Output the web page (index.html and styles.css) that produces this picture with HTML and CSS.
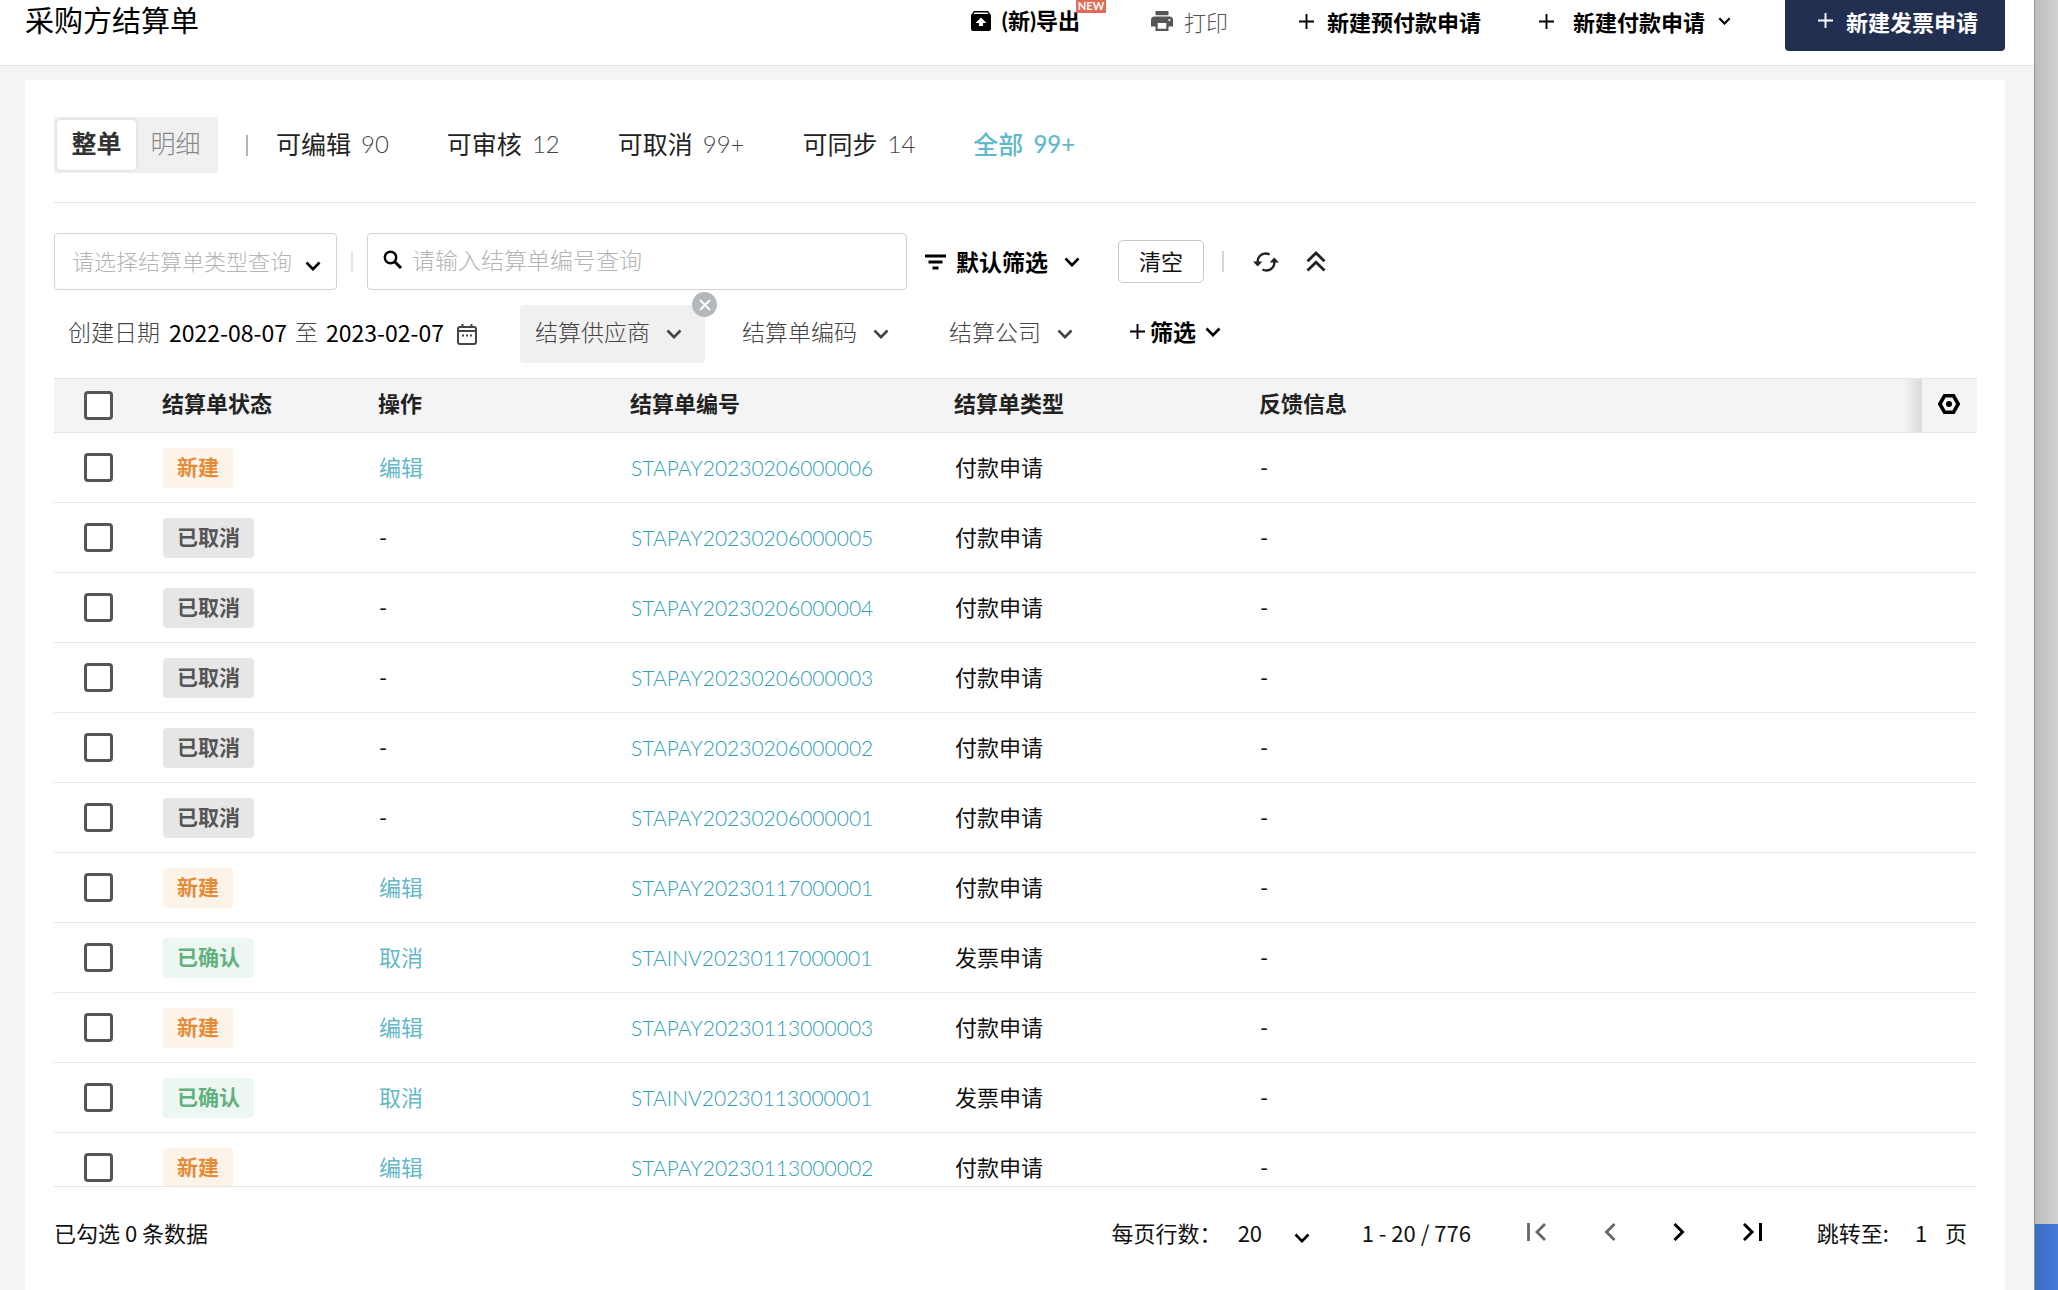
FILE: index.html
```html
<!DOCTYPE html>
<html lang="zh-CN">
<head>
<meta charset="utf-8">
<meta name="viewport" content="width=device-width, initial-scale=1">
<title>采购方结算单</title>
<link rel="stylesheet" href="styles.css">
</head>
<body>
<svg class="sprite" aria-hidden="true">
  <symbol id="chevron" viewBox="0 0 16 10"><path d="M1.5 1.5 8 8.2l6.5-6.7" fill="none" stroke="currentColor" stroke-width="2.6"/></symbol>
  <symbol id="plus" viewBox="0 0 16 16"><path d="M8 0v16M0 8h16" fill="none" stroke="currentColor" stroke-width="2"/></symbol>
</svg>
<div class="window">
  <header class="topbar">
    <h1 class="title">采购方结算单</h1>
    <div class="actions">
      <button class="action export" type="button">
        <svg width="20" height="20" viewBox="0 0 20 20"><path fill="currentColor" fill-rule="evenodd" d="M3 0h14l3 4v14a2 2 0 0 1-2 2H2a2 2 0 0 1-2-2V4zM2.4 3h15.200l-1.200-1.600H3.600zM10 6.500l-5.500 5.500H8v3h4v-3h3.500z"/></svg>
        <span>(新)导出</span><span class="new">NEW</span>
      </button>
      <button class="action print" type="button">
        <svg width="22" height="20" viewBox="0 0 22 20"><path fill="currentColor" fill-rule="evenodd" d="M4.500 0h13v4.200h-13zM3.500 5.500h15A3.500 3.500 0 0 1 22 9v6.500h-4.500V20h-13v-4.500H0V9a3.500 3.500 0 0 1 3.500-3.500zM6.700 12v5.800h8.600V12zM18.400 8a1.100 1.100 0 1 0 0 2.200 1.100 1.100 0 0 0 0-2.200z"/></svg>
        <span>打印</span>
      </button>
      <button class="action prepay" type="button"><svg width="15" height="15"><use href="#plus"/></svg><span>新建预付款申请</span></button>
      <button class="action pay" type="button"><svg width="15" height="15"><use href="#plus"/></svg><span>新建付款申请</span><svg class="caret" width="13" height="8"><use href="#chevron"/></svg></button>
      <button class="action primary" type="button"><svg width="15" height="15"><use href="#plus"/></svg><span>新建发票申请</span></button>
    </div>
  </header>

  <main class="panel">
    <nav class="tabs">
      <div class="segment">
        <button class="seg active" type="button">整单</button>
        <button class="seg" type="button">明细</button>
      </div>
      <span class="rule dark"></span>
      <div class="states">
        <button class="state" type="button">可编辑<span class="count">90</span></button>
        <button class="state" type="button">可审核<span class="count">12</span></button>
        <button class="state" type="button">可取消<span class="count">99+</span></button>
        <button class="state" type="button">可同步<span class="count">14</span></button>
        <button class="state current" type="button">全部<span class="count">99+</span></button>
      </div>
    </nav>

    <div class="query">
      <div class="pick">
        <select class="pick-select" aria-label="结算单类型"><option>请选择结算单类型查询</option></select>
        <svg class="pick-icon" width="16" height="10"><use href="#chevron"/></svg>
      </div>
      <span class="rule light"></span>
      <label class="search">
        <svg width="20" height="20" viewBox="0 0 20 20"><circle cx="7.500" cy="7.500" r="5.700" fill="none" stroke="currentColor" stroke-width="2.400"/><path d="M11.500 11.500 18 18" stroke="currentColor" stroke-width="3"/></svg>
        <input class="search-input" type="text" placeholder="请输入结算单编号查询" aria-label="结算单编号">
      </label>
      <button class="preset" type="button">
        <svg width="21" height="16" viewBox="0 0 21 16"><path d="M0 2h21M3.500 8h14M7.500 14h6" stroke="currentColor" stroke-width="3"/></svg>
        <span>默认筛选</span>
        <svg class="preset-caret" width="16" height="10"><use href="#chevron"/></svg>
      </button>
      <button class="clear" type="button">清空</button>
      <span class="rule"></span>
      <button class="tool" type="button" aria-label="刷新">
        <svg width="26" height="22" viewBox="0 0 26 22"><g fill="none" stroke="currentColor" stroke-width="2.400"><path d="M4.600 11.500V11a8 8 0 0 1 8-8.500c1.500 0 2.800.4 4 1"/><path d="M21.400 10.500v.5a8 8 0 0 1-8 8.500c-1.500 0-2.800-.4-4-1"/></g><path fill="currentColor" d="M0 10.500h9.400l-4.700 5zM26 11.500h-9.400l4.700-5z"/></svg>
      </button>
      <button class="tool fold" type="button" aria-label="收起">
        <svg width="20" height="21" viewBox="0 0 20 21"><path d="M1.500 10.200 10 2l8.500 8.200M1.500 19.500l8.500-8.200 8.500 8.200" fill="none" stroke="currentColor" stroke-width="2.800"/></svg>
      </button>
    </div>

    <div class="filters">
      <div class="dates">
        <span class="dates-label">创建日期</span>
        <input class="date" type="text" value="2022-08-07" aria-label="创建日期起">
        <span class="to">至</span>
        <input class="date" type="text" value="2023-02-07" aria-label="创建日期止">
        <svg class="calendar" width="20" height="21" viewBox="0 0 20 21"><rect x="1" y="3" width="18" height="17" rx="2" fill="none" stroke="currentColor" stroke-width="2"/><path d="M1 7h18M5.500 0v4M14.500 0v4" stroke="currentColor" stroke-width="2"/><path d="M5 11.500h2M9 11.500h2M13 11.500h2" stroke="currentColor" stroke-width="2"/></svg>
      </div>
      <div class="chip-wrap">
        <button class="chip filled" type="button">结算供应商<svg width="16" height="10"><use href="#chevron"/></svg></button>
        <button class="remove" type="button" aria-label="移除"><svg width="12" height="12" viewBox="0 0 12 12"><path d="M1 1l10 10M11 1 1 11" stroke="currentColor" stroke-width="1.800"/></svg></button>
      </div>
      <button class="chip" type="button">结算单编码<svg width="16" height="10"><use href="#chevron"/></svg></button>
      <button class="chip" type="button">结算公司<svg width="16" height="10"><use href="#chevron"/></svg></button>
      <button class="add" type="button"><svg width="15" height="15"><use href="#plus"/></svg><span>筛选</span><svg class="add-caret" width="16" height="10"><use href="#chevron"/></svg></button>
    </div>

    <div class="grid">
      <table class="table">
        <colgroup><col class="c-check"><col class="c-state"><col class="c-op"><col class="c-no"><col class="c-type"><col><col class="c-set"></colgroup>
        <thead>
          <tr>
            <th class="check"><input class="box" type="checkbox" aria-label="全选"></th>
            <th>结算单状态</th><th>操作</th><th>结算单编号</th><th>结算单类型</th><th class="shade">反馈信息</th>
            <th class="set"><button class="tool" type="button" aria-label="列设置"><svg width="22" height="20" viewBox="0 0 22 20"><path d="M6.500 1.800h9L20.200 10l-4.700 8.200h-9L1.800 10z" fill="none" stroke="currentColor" stroke-width="3.600"/><circle cx="11" cy="10" r="3" fill="currentColor"/></svg></button></th>
          </tr>
        </thead>
        <tbody>
          <tr><td class="check"><input class="box" type="checkbox" aria-label="选择"></td><td><span class="tag fresh">新建</span></td><td><a href="#">编辑</a></td><td><a class="code" href="#">STAPAY20230206000006</a></td><td>付款申请</td><td>-</td><td></td></tr>
          <tr><td class="check"><input class="box" type="checkbox" aria-label="选择"></td><td><span class="tag void">已取消</span></td><td>-</td><td><a class="code" href="#">STAPAY20230206000005</a></td><td>付款申请</td><td>-</td><td></td></tr>
          <tr><td class="check"><input class="box" type="checkbox" aria-label="选择"></td><td><span class="tag void">已取消</span></td><td>-</td><td><a class="code" href="#">STAPAY20230206000004</a></td><td>付款申请</td><td>-</td><td></td></tr>
          <tr><td class="check"><input class="box" type="checkbox" aria-label="选择"></td><td><span class="tag void">已取消</span></td><td>-</td><td><a class="code" href="#">STAPAY20230206000003</a></td><td>付款申请</td><td>-</td><td></td></tr>
          <tr><td class="check"><input class="box" type="checkbox" aria-label="选择"></td><td><span class="tag void">已取消</span></td><td>-</td><td><a class="code" href="#">STAPAY20230206000002</a></td><td>付款申请</td><td>-</td><td></td></tr>
          <tr><td class="check"><input class="box" type="checkbox" aria-label="选择"></td><td><span class="tag void">已取消</span></td><td>-</td><td><a class="code" href="#">STAPAY20230206000001</a></td><td>付款申请</td><td>-</td><td></td></tr>
          <tr><td class="check"><input class="box" type="checkbox" aria-label="选择"></td><td><span class="tag fresh">新建</span></td><td><a href="#">编辑</a></td><td><a class="code" href="#">STAPAY20230117000001</a></td><td>付款申请</td><td>-</td><td></td></tr>
          <tr><td class="check"><input class="box" type="checkbox" aria-label="选择"></td><td><span class="tag done">已确认</span></td><td><a href="#">取消</a></td><td><a class="code" href="#">STAINV20230117000001</a></td><td>发票申请</td><td>-</td><td></td></tr>
          <tr><td class="check"><input class="box" type="checkbox" aria-label="选择"></td><td><span class="tag fresh">新建</span></td><td><a href="#">编辑</a></td><td><a class="code" href="#">STAPAY20230113000003</a></td><td>付款申请</td><td>-</td><td></td></tr>
          <tr><td class="check"><input class="box" type="checkbox" aria-label="选择"></td><td><span class="tag done">已确认</span></td><td><a href="#">取消</a></td><td><a class="code" href="#">STAINV20230113000001</a></td><td>发票申请</td><td>-</td><td></td></tr>
          <tr><td class="check"><input class="box" type="checkbox" aria-label="选择"></td><td><span class="tag fresh">新建</span></td><td><a href="#">编辑</a></td><td><a class="code" href="#">STAPAY20230113000002</a></td><td>付款申请</td><td>-</td><td></td></tr>
        </tbody>
      </table>
    </div>

    <footer class="pager">
      <span class="picked">已勾选 0 条数据</span>
      <label for="size">每页行数：</label>
      <div class="size">
        <select id="size" class="size-select"><option>20</option></select>
        <svg class="size-icon" width="16" height="10"><use href="#chevron"/></svg>
      </div>
      <span class="range">1 - 20 / 776</span>
      <div class="steps">
        <button class="step off" type="button" aria-label="首页"><svg width="20" height="18" viewBox="0 0 20 18"><path d="M1.500 0v18M18 1l-8 8 8 8" fill="none" stroke="currentColor" stroke-width="2.800"/></svg></button>
        <button class="step off" type="button" aria-label="上一页"><svg width="12" height="18" viewBox="0 0 12 18"><path d="M10.500 1l-8 8 8 8" fill="none" stroke="currentColor" stroke-width="2.800"/></svg></button>
        <button class="step" type="button" aria-label="下一页"><svg width="12" height="18" viewBox="0 0 12 18"><path d="M1.500 1l8 8-8 8" fill="none" stroke="currentColor" stroke-width="3"/></svg></button>
        <button class="step" type="button" aria-label="末页"><svg width="20" height="18" viewBox="0 0 20 18"><path d="M18.500 0v18M2 1l8 8-8 8" fill="none" stroke="currentColor" stroke-width="3"/></svg></button>
      </div>
      <label for="jump">跳转至:</label>
      <input id="jump" class="jump" type="text" value="1">
      <span>页</span>
    </footer>
  </main>
</div>
<aside class="desktop"><div class="desktop-blue"></div></aside>
</body>
</html>
```
FILE: styles.css
```css
* { box-sizing: border-box; }

body {
  display: flex;
  height: 100vh;
  margin: 0;
  overflow: hidden;
  color: #111;
  background: #f3f4f6;
  font: 22px/32px Lato, "Noto Sans CJK SC", sans-serif;
}

button, input, select { font: inherit; color: inherit; }
button { display: inline-flex; align-items: center; margin: 0; padding: 0; border: 0; background: none; white-space: nowrap; }
input, select { border: 0; margin: 0; padding: 0; background: none; outline: 0; appearance: none; }
svg { flex: none; display: block; }
a { color: #64b8c8; text-decoration: none; }
.sprite { position: absolute; width: 0; height: 0; }

.window { flex: 1; min-width: 0; display: flex; flex-direction: column; }

/* simulated desktop behind the window edge */
.desktop {
  width: 24px;
  display: flex;
  flex-direction: column;
  justify-content: flex-end;
  border-left: 1px solid #94979a;
  background: linear-gradient(to right, #bcbcbc, #d2d2d2);
}
.desktop-blue { height: 66px; background: linear-gradient(to right, #3c6cc4, #467bdc); }

/* top bar */
.topbar {
  display: flex;
  justify-content: space-between;
  align-items: flex-start;
  height: 66px;
  padding: 0 29px 0 25px;
  border-bottom: 1px solid #e2e3e5;
  background: #fff;
}
.title { margin: 0; font-size: 29px; line-height: 42px; font-weight: 400; color: #000; }
.actions { display: flex; align-items: flex-start; }
.action { height: 42px; gap: 13px; line-height: 22px; font-weight: 700; color: #000; font-family: "Noto Sans CJK SC", sans-serif; }
.export { position: relative; gap: 11px; font-family: Lato, "Noto Sans CJK SC", sans-serif; }
.new {
  position: absolute;
  left: 105px;
  top: 0;
  height: 13px;
  padding: 0 2px;
  background: #e06c58;
  color: #fff;
  font: 700 11px/12px Lato, sans-serif;
}
.print { margin-left: 71px; gap: 11px; font-weight: 300; color: #555; }
.prepay { margin-left: 71px; }
.pay { margin-left: 58px; gap: 19px; }
.caret { margin-left: -6px; }
.primary {
  height: 51px;
  margin-left: 54px;
  padding: 0 27px 10px 33px;
  border-radius: 0 0 4px 4px;
  background: #222f50;
  color: #fff;
}

/* content panel */
.panel {
  flex: 1;
  min-height: 0;
  display: flex;
  flex-direction: column;
  margin: 14px 29px 0 25px;
  padding: 37px 28px 8px 29px;
  background: #fff;
}
.rule { width: 2px; height: 21px; background: #d5d5d5; }
.rule.dark { background: #b5b5b5; margin: 0 28px; }
.rule.light { background: #e6e6e6; margin: 0 14px; }

.tabs {
  display: flex;
  align-items: center;
  padding-bottom: 29px;
  border-bottom: 1px solid #e5e5e5;
  font-size: 25px;
}
.segment { display: flex; padding: 3px; background: #f0f0f0; height: 56px; }
.seg { justify-content: center; width: 79px; height: 50px; padding-bottom: 4px; color: #888; font-weight: 300; }
.seg.active { background: #fff; color: #333; font-weight: 700; border-radius: 4px; box-shadow: 0 0 4px rgba(0, 0, 0, .12); }
.states { display: flex; gap: 58px; padding-bottom: 3px; }
.state { gap: 10px; color: #222; }
.count { color: #444; font-size: 24px; font-weight: 300; }
.state.current, .current .count { color: #5fb9cb; font-weight: 500; }

/* query row */
.query { display: flex; align-items: center; margin-top: 30px; }
.pick { display: grid; width: 283px; height: 57px; border: 1px solid #d2d2d2; border-radius: 4px; }
.pick > * { grid-area: 1 / 1; }
.pick-select { width: 100%; padding-left: 17px; color: #b4b4b4; font-weight: 300; }
.pick-icon { place-self: center end; margin: 8px 15px 0 0; color: #000; pointer-events: none; }
.search { display: flex; align-items: center; gap: 9px; width: 540px; height: 57px; padding: 0 15px 3px; border: 1px solid #d2d2d2; border-radius: 4px; color: #000; }
.search-input { flex: 1; min-width: 0; font-size: 23px; font-weight: 300; }
.search-input::placeholder { color: #b4b4b4; opacity: 1; }
.preset { margin-left: 18px; gap: 10px; font-size: 23px; font-weight: 700; color: #000; }
.preset-caret { margin-left: 6px; }
.clear { justify-content: center; width: 86px; height: 43px; margin: 0 18px 0 38px; border: 1px solid #c8c8c8; border-radius: 5px; }
.tool { color: #222; }
.query .tool { margin-left: 29px; }
.query .fold { margin-left: 27px; }

/* filter chips */
.filters { display: flex; align-items: center; height: 58px; margin: 15px 0; padding-left: 14px; font-size: 23px; }
.dates { display: flex; align-items: center; padding-bottom: 5px; color: #444; }
.dates-label { font-weight: 300; margin-right: 9px; }
.date { width: 118px; font-family: "Noto Sans CJK SC", sans-serif; color: #000; }
.to { margin: 0 8px; font-weight: 300; }
.calendar { margin: 6px 0 0 13px; }
.chip-wrap { position: relative; margin: 0 22px 0 43px; }
.chip { gap: 16px; height: 58px; padding: 0 15px 5px; font-weight: 300; color: #444; }
.chip.filled { width: 185px; background: #f0f0f0; border-radius: 4px; }
.chip svg { margin-top: 5px; }
.chip + .chip { margin-left: 30px; }
.remove { position: absolute; top: -13px; right: -12px; width: 25px; height: 25px; justify-content: center; border-radius: 50%; background: #b4b7bd; color: #fff; }
.add { margin-left: 42px; padding-bottom: 5px; gap: 5px; font-weight: 700; color: #000; }
.add-caret { margin-left: 4px; }

/* data table */
.grid { flex: 1; min-height: 0; overflow: auto; scrollbar-width: none; border-bottom: 1px solid #e5e5e5; }
.table { width: 100%; table-layout: fixed; border-collapse: separate; border-spacing: 0; }
.c-check { width: 94px; }
.c-state { width: 216px; }
.c-op { width: 252px; }
.c-no { width: 324px; }
.c-type { width: 305px; }
.c-set { width: 55px; }
.table th {
  position: sticky;
  top: 0;
  height: 55px;
  padding: 0 14px 4px;
  border-top: 1px solid #e5e5e5;
  border-bottom: 1px solid #e5e5e5;
  background: #f4f4f4;
  color: #222;
  font-weight: 700;
  text-align: left;
}
.table td { height: 70px; padding: 0 15px; border-bottom: 1px solid #e9e9e9; }
.table .check { padding: 0 0 0 30px; }
.table .shade { background: linear-gradient(to left, #dadada, #f4f4f4 18px); }
.table .set { padding: 0 0 0 16px; }
.set .tool { color: #000; }
.code { font-size: 21px; font-weight: 300; color: #2fa0b6; }
.box { display: block; width: 29px; height: 29px; border: 3px solid #555; border-radius: 4px; background: #fff; }
.tag { display: inline-block; height: 40px; padding: 0 14px; border-radius: 4px; line-height: 38px; font-size: 21px; font-weight: 700; }
.fresh { background: #fdf3e9; color: #e58b35; }
.void { background: #e6e6e6; color: #555; }
.done { background: #edf7f2; color: #62b07e; }

/* pagination */
.pager { display: flex; align-items: center; height: 95px; padding-bottom: 6px; color: #111; font-family: "Noto Sans CJK SC", sans-serif; }
.picked { margin-right: auto; }
.size { display: grid; width: 72px; margin-left: 16px; }
.size > * { grid-area: 1 / 1; }
.size-select { width: 100%; }
.size-icon { place-self: center end; margin-top: 12px; pointer-events: none; color: #000; }
.range { margin-left: 52px; }
.steps { display: flex; gap: 57px; margin: 0 55px 0 56px; }
.step { color: #000; }
.step.off { color: #666; }
.jump { width: 12px; margin: 0 18px 0 26px; }
.pager > span:last-child { margin-right: 10px; }
```
